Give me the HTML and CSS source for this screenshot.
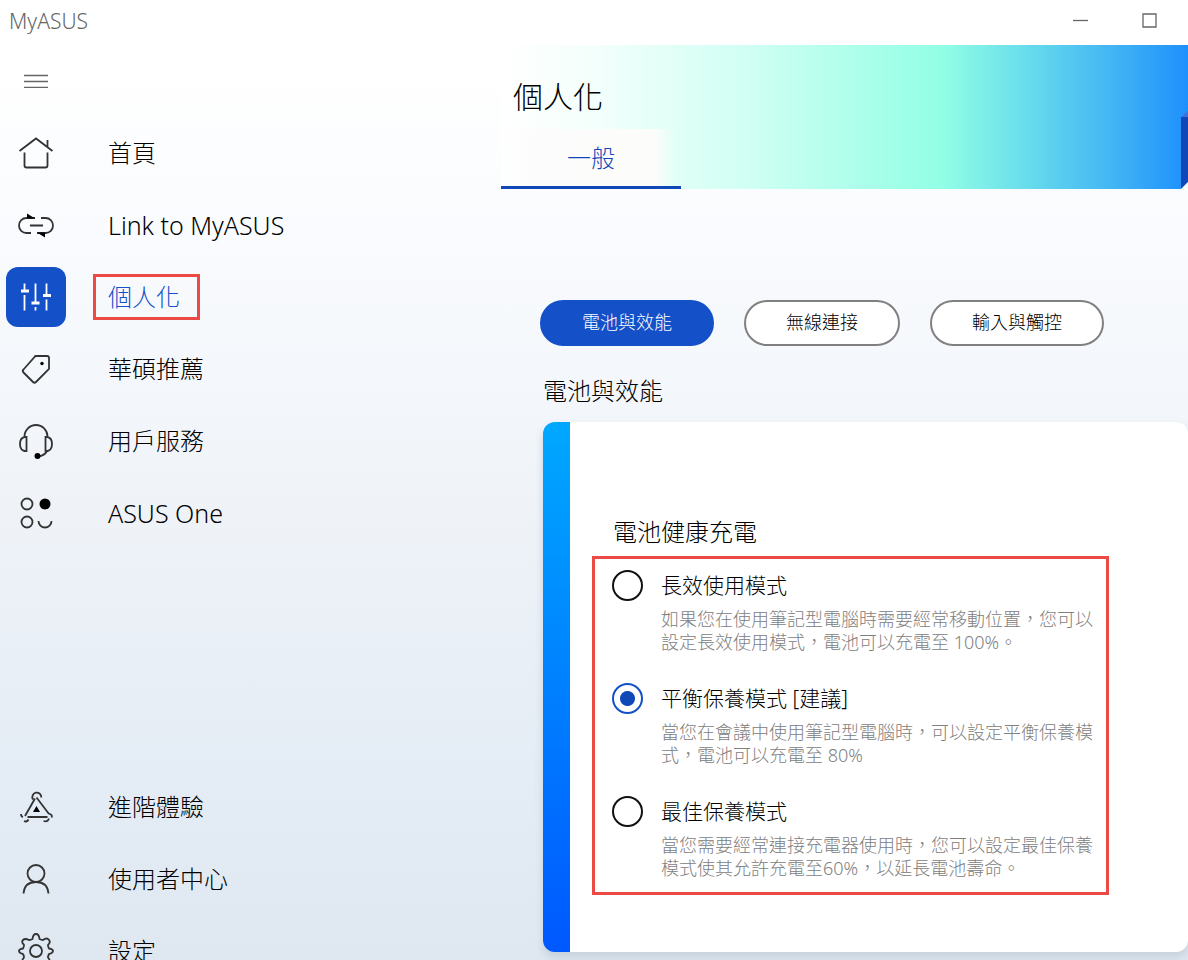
FILE: index.html
```html
<!DOCTYPE html>
<html lang="zh-Hant">

<head>
    <meta charset="UTF-8">
    <title>MyASUS</title>
    <link rel="stylesheet" href="styles.css">
</head>

<body>
    <header class="titlebar">
        <span class="app-name">MyASUS</span>
        <div class="window-buttons">
            <button type="button" aria-label="最小化">
                <svg width="16" height="16" viewBox="0 0 16 16"><path d="M0 7.5h15" /></svg>
            </button>
            <button type="button" aria-label="最大化">
                <svg width="16" height="16" viewBox="0 0 16 16"><path d="M1 1h13v13H1z" /></svg>
            </button>
        </div>
    </header>

    <div class="app">
        <nav class="sidebar">
            <button type="button" class="menu-button" aria-label="選單">
                <svg width="24" height="14" viewBox="0 0 24 14"><path d="M0 1.5h24M0 7.5h24M0 13.5h24" /></svg>
            </button>

            <a class="nav-item" href="#">
                <span class="nav-icon">
                    <svg width="36" height="36" viewBox="0 0 36 36">
                        <path d="M1.5 16L18 3.5l16.5 12.5M29.5 5v7M6.5 17.5v13q0 2 2 2h19q2 0 2-2v-13" />
                    </svg>
                </span>
                <span class="nav-text">首頁</span>
            </a>
            <a class="nav-item" href="#">
                <span class="nav-icon">
                    <svg width="36" height="36" viewBox="0 0 36 36">
                        <path d="M17 11H8.5a7.5 7.5 0 0 0 0 15H13M23 11h4.5a7.5 7.5 0 0 1 0 15H19M12 18.5h13" />
                        <path class="solid" d="M9 6.5l8 5H9zM27 30.5L19 25.500h8z" />
                    </svg>
                </span>
                <span class="nav-text latin">Link to MyASUS</span>
            </a>
            <a class="nav-item active" href="#">
                <span class="nav-icon">
                    <svg width="36" height="36" viewBox="0 0 36 36">
                        <path d="M6.5 4.5v27M17.5 4.5v27M28.5 4.5v27" />
                        <path class="bar-gap" d="M6.5 13v3M17.5 25v3M28.5 17.500v3" />
                        <path class="bar" d="M3 12h8M13.5 24h8M25 16.5h8" />
                    </svg>
                </span>
                <span class="nav-text boxed">個人化</span>
            </a>
            <a class="nav-item" href="#">
                <span class="nav-icon">
                    <svg width="36" height="36" viewBox="0 0 36 36">
                        <path d="M18 5h11q2 0 2 2v11L18 31q-1.5 1.5-3 0L5.500 21.500q-1.500-1.500 0-3L16.500 6q.5-1 1.500-1z" />
                        <circle class="solid" cx="24" cy="12.5" r="1.7" />
                    </svg>
                </span>
                <span class="nav-text">華碩推薦</span>
            </a>
            <a class="nav-item" href="#">
                <span class="nav-icon">
                    <svg width="36" height="36" viewBox="0 0 36 36">
                        <path d="M6.5 15v-1.5a11.5 11.5 0 0 1 23 0V15M8.5 14v14H6.500Q2 27 2 21t4.500-7zM27.500 14v14h2q4.500-1 4.500-7t-4.500-7zM29 28q-2 4-8 5.500" />
                        <circle class="solid" cx="19.5" cy="33" r="3" />
                    </svg>
                </span>
                <span class="nav-text">用戶服務</span>
            </a>
            <a class="nav-item" href="#">
                <span class="nav-icon">
                    <svg width="36" height="36" viewBox="0 0 36 36">
                        <circle cx="9" cy="9" r="5.5" />
                        <circle class="solid" cx="27" cy="9" r="5.5" />
                        <circle cx="9" cy="27" r="5.5" />
                        <path d="M20.5 26a6.5 6.5 0 0 0 13 0" />
                    </svg>
                </span>
                <span class="nav-text latin">ASUS One</span>
            </a>

            <a class="nav-item nav-bottom" href="#">
                <span class="nav-icon">
                    <svg width="36" height="36" viewBox="0 0 36 36">
                        <path d="M15 10.500a4.500 4.500 0 1 1 8.300-2M18.500 8.500L31 25M17 9.500L7 27M9.500 28h20M3 25q0 2.500 2 3M6 32q3 1.500 4.500-1.500M31 24.500q4 1.500 2.500 4M25.500 32q4 1.500 5.500-2.500" />
                        <path class="solid" d="M18.500 17l3.500 6h-7z" />
                    </svg>
                </span>
                <span class="nav-text">進階體驗</span>
            </a>
            <a class="nav-item" href="#">
                <span class="nav-icon">
                    <svg width="36" height="36" viewBox="0 0 36 36">
                        <circle cx="18" cy="12.5" r="8.5" />
                        <path d="M5.5 32.5q1-11.5 12.5-11.5t12.5 11.5" />
                    </svg>
                </span>
                <span class="nav-text">使用者中心</span>
            </a>
            <a class="nav-item" href="#">
                <span class="nav-icon">
                    <svg width="36" height="36" viewBox="0 0 36 36">
                        <circle cx="18" cy="18" r="6" />
                        <path d="M18 1q3 0 3.500 5 2 1 3.500 1 4-3 6 0 2 2-1 5 0 2 1 3.500 4 .5 4 2.500t-4 3q-1 2-1 3.500 3 3.500 1 5.500t-6-.5q-2 0-3.500 1-.5 4.500-3.500 4.500t-3.500-4.500q-2-1-3.500-1-4 2.500-6 .5t1-5.500q0-2-1-3.500-4-1-4-3t4-2.500q1-2 1-3.500-3-3-1-5t6 0q2 0 3.500-1Q15 1 18 1z" />
                    </svg>
                </span>
                <span class="nav-text">設定</span>
            </a>
        </nav>

        <main class="content">
            <section class="banner">
                <h1>個人化</h1>
                <a class="tab" href="#">一般</a>
                <svg class="banner-edge" width="8" height="78" viewBox="0 0 8 78">
                    <path class="edge-top" d="M1 6l7-6v6z" />
                    <path class="edge-side" d="M1 6h7v65l-7 7z" />
                    <path class="edge-cut" d="M8 71v7H1z" />
                </svg>
            </section>

            <div class="pills">
                <button type="button" class="pill selected">電池與效能</button>
                <button type="button" class="pill">無線連接</button>
                <button type="button" class="pill">輸入與觸控</button>
            </div>

            <h2>電池與效能</h2>

            <section class="card">
                <h3>電池健康充電</h3>
                <div class="modes">
                    <div class="mode">
                        <input type="radio" name="mode" id="mode-full">
                        <div class="mode-text">
                            <label for="mode-full">長效使用模式</label>
                            <p>如果您在使用筆記型電腦時需要經常移動位置，您可以設定長效使用模式，電池可以充電至 100%。</p>
                        </div>
                    </div>
                    <div class="mode">
                        <input type="radio" name="mode" id="mode-balanced" checked>
                        <div class="mode-text">
                            <label for="mode-balanced">平衡保養模式 [建議]</label>
                            <p>當您在會議中使用筆記型電腦時，可以設定平衡保養模式，電池可以充電至 80%</p>
                        </div>
                    </div>
                    <div class="mode">
                        <input type="radio" name="mode" id="mode-max">
                        <div class="mode-text">
                            <label for="mode-max">最佳保養模式</label>
                            <p>當您需要經常連接充電器使用時，您可以設定最佳保養模式使其允許充電至60%，以延長電池壽命。</p>
                        </div>
                    </div>
                </div>
            </section>
        </main>
    </div>
</body>

</html>
```

FILE: styles.css
```css
* {
    box-sizing: border-box;
}

body {
    margin: 0;
    height: 100vh;
    overflow: hidden;
    display: flex;
    flex-direction: column;
    background: linear-gradient(#fff 64px, #f9fbfe 240px, #eff3f8 510px, #e4ecf5 780px, #dfe8f1 100%);
    color: #000;
    font-family: "Noto Sans", "Noto Sans CJK TC", sans-serif;
    font-weight: 300;
}

h1,
h2,
h3,
p {
    margin: 0;
    font-weight: 300;
}

button {
    font: inherit;
    cursor: pointer;
}

a {
    text-decoration: none;
    color: inherit;
}

svg {
    display: block;
    fill: none;
    stroke: #333;
    stroke-width: 1.8;
}

.titlebar {
    flex: none;
    display: flex;
    justify-content: space-between;
    align-items: center;
    height: 45px;
    padding: 0 30px 4px 9px;
    background: #fff;
}

.app-name {
    font-size: 21px;
    color: #666;
}

.window-buttons {
    display: flex;
    gap: 53px;
}

.window-buttons button,
.menu-button {
    padding: 0;
    border: 0;
    background: none;
}

.window-buttons svg,
.menu-button svg {
    stroke: #666;
    stroke-width: 1.3;
}

.app {
    flex: 1;
    min-height: 0;
    display: flex;
}

/* sidebar */
.sidebar {
    flex: none;
    width: 501px;
    display: flex;
    flex-direction: column;
}

.menu-button {
    flex: none;
    align-self: flex-start;
    height: 72px;
    padding: 0 24px;
}

.nav-item {
    flex: none;
    display: flex;
    align-items: center;
    gap: 27px;
    height: 72px;
    padding-left: 6px;
    font-size: 24px;
}

.nav-icon {
    display: flex;
    align-items: center;
    justify-content: center;
    width: 60px;
    height: 60px;
    border-radius: 12px;
}

.nav-text {
    padding: 0 17px 0 12px;
    line-height: 40px;
    border: 3px solid transparent;
}

.nav-text.latin {
    font-size: 25px;
}

.nav-item.active {
    color: #1450c8;
}

.active .nav-icon {
    background: #1450c8;
}

.active svg {
    stroke: #fff;
}

.active .bar {
    stroke-width: 3;
}

.active .bar-gap {
    stroke: #1450c8;
    stroke-width: 3;
}

.nav-text.boxed {
    border-color: #ec4a44;
}

.solid {
    fill: #000;
    stroke: none;
}

.nav-bottom {
    margin-top: 222px;
}

/* content */
.content {
    flex: 1;
    min-width: 0;
}

.banner {
    position: relative;
    display: flex;
    flex-direction: column;
    align-items: flex-start;
    justify-content: space-between;
    height: 144px;
    padding-top: 30px;
    background: linear-gradient(90deg, #fff, #f3fffc 14%, #d0fff3 36%, #92ffe5 64%, #66dbec 77%, #42b5f4 89%, #1e90fc);
}

.banner h1 {
    padding-left: 12px;
    font-size: 30px;
    line-height: 44px;
}

.tab {
    width: 180px;
    height: 60px;
    border-bottom: 3px solid #1048b8;
    background: linear-gradient(90deg, transparent, #fdfcfc 20%, #fcfcfb 84%, transparent 97%);
    color: #1048b8;
    font-size: 24px;
    line-height: 58px;
    text-align: center;
}

.banner-edge {
    position: absolute;
    right: 0;
    bottom: 0;
    stroke: none;
}

.edge-top {
    fill: #4070d8;
}

.edge-side {
    fill: #1048b8;
}

.edge-cut {
    fill: #fbfcfe;
}

.pills {
    display: flex;
    gap: 30px;
    margin: 111px 0 0 39px;
}

.pill {
    height: 46px;
    padding: 0 40px 4px;
    border: 2px solid #808080;
    border-radius: 23px;
    background: #fff;
    color: #000;
    font-size: 18px;
}

.pill.selected {
    border-color: #1450c8;
    background: #1450c8;
    color: #fff;
}

h2 {
    margin: 26px 0 12px 42px;
    font-size: 24px;
    line-height: 38px;
}

.card {
    height: 530px;
    margin-left: 42px;
    padding: 90px 79px 0 49px;
    border-radius: 12px;
    background: linear-gradient(#00a8ff, #0058ff) left / 27px 100% no-repeat, #fff;
    box-shadow: 0 6px 8px #c8d2de;
}

.card h3 {
    padding-left: 21px;
    font-size: 24px;
    line-height: 40px;
}

.modes {
    display: flex;
    flex-direction: column;
    gap: 29px;
    margin-top: 4px;
    padding: 11px 12px 12px 17px;
    border: 3px solid #ec4a44;
}

.mode {
    display: flex;
    align-items: flex-start;
    gap: 18px;
}

.mode input {
    flex: none;
    appearance: none;
    width: 31px;
    height: 31px;
    margin: 0;
    border: 2px solid #111;
    border-radius: 50%;
}

.mode input:checked {
    border-color: #1450c8;
    background: radial-gradient(circle, #1048b8 7px, transparent 8px);
}

.mode label {
    display: block;
    font-size: 21px;
    line-height: 30px;
}

.mode p {
    margin-top: 8px;
    color: #808080;
    font-size: 18px;
    line-height: 23px;
}
```
